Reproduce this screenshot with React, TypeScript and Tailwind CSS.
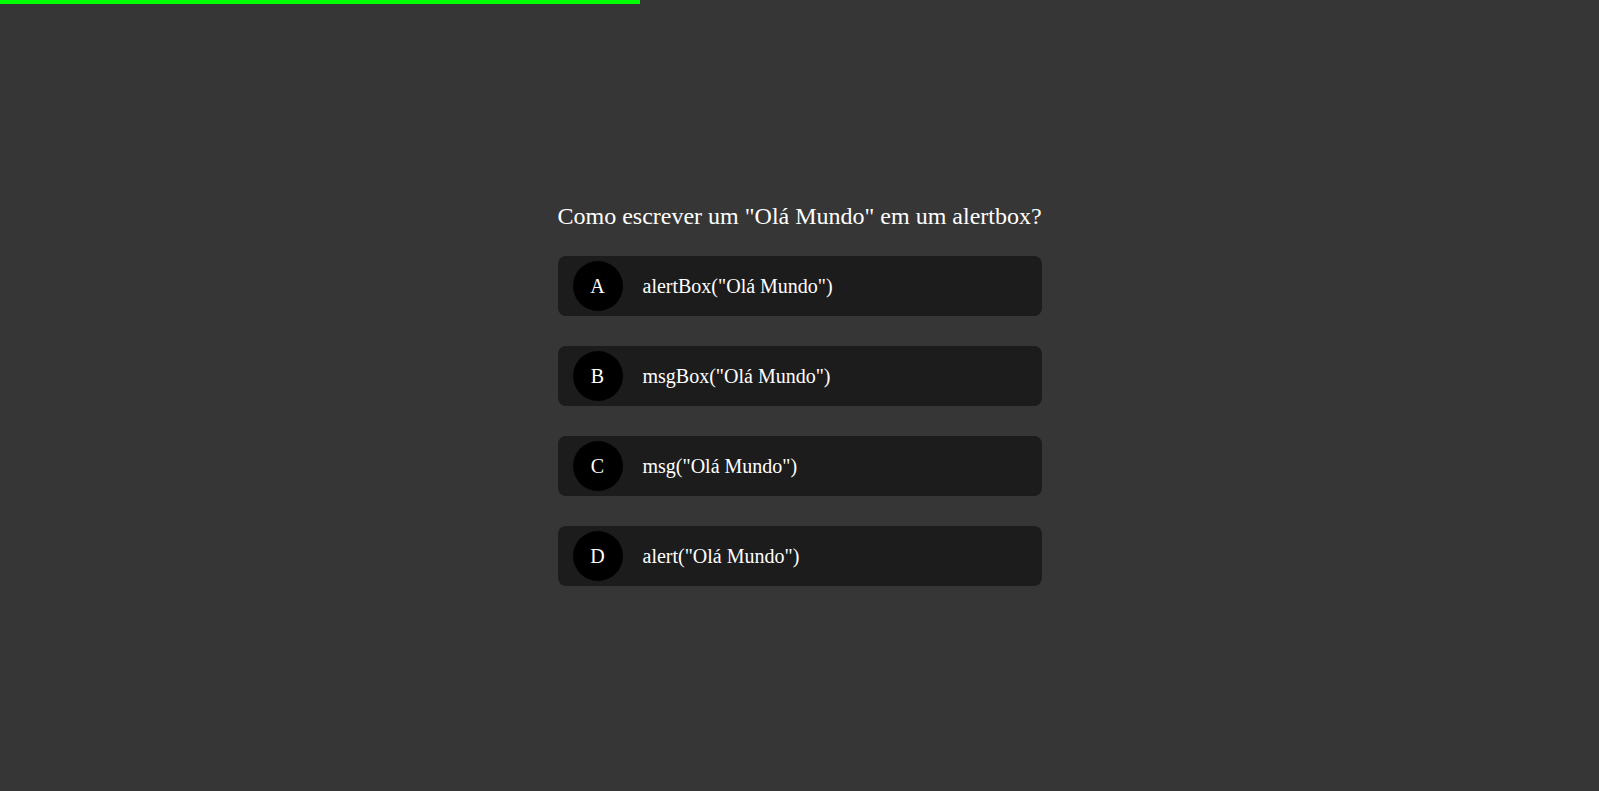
import React from 'react';

const options = [
  { letter: 'A', text: 'alertBox("Olá Mundo")' },
  { letter: 'B', text: 'msgBox("Olá Mundo")' },
  { letter: 'C', text: 'msg("Olá Mundo")' },
  { letter: 'D', text: 'alert("Olá Mundo")' },
];

export default function App() {
  return (
    <div className="min-h-screen w-full bg-[#363636] font-['Liberation_Serif',serif] text-white flex flex-col">
      <div className="h-1 w-[40%] bg-[#00ff00]" />
      <div className="flex-1 flex items-center justify-center">
        <div className="w-[484px] -mt-[6px]">
          <h2 className="text-[24px] leading-[27px] mb-[26px] whitespace-nowrap">
            Como escrever um "Olá Mundo" em um alertbox?
          </h2>
          <div className="flex flex-col gap-[30px]">
            {options.map((o) => (
              <div
                key={o.letter}
                className="flex items-center h-[60px] px-[15px] rounded-lg bg-[#1c1c1c] text-[20px]"
              >
                <div className="w-[50px] h-[50px] rounded-full bg-black flex items-center justify-center">
                  {o.letter}
                </div>
                <span className="ml-5">{o.text}</span>
              </div>
            ))}
          </div>
        </div>
      </div>
    </div>
  );
}
